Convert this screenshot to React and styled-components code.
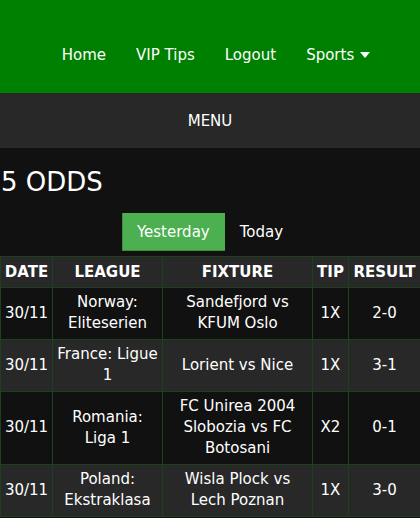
import React, { useState } from "react";
import styled, { createGlobalStyle } from "styled-components";

const tips = [
    { date: "30/11", league: "Norway: Eliteserien", fixture: "Sandefjord vs KFUM Oslo", tip: "1X", result: "2-0" },
    { date: "30/11", league: "France: Ligue 1", fixture: "Lorient vs Nice", tip: "1X", result: "3-1" },
    { date: "30/11", league: "Romania: Liga 1", fixture: "FC Unirea 2004 Slobozia vs FC Botosani", tip: "X2", result: "0-1" },
    { date: "30/11", league: "Poland: Ekstraklasa", fixture: "Wisla Plock vs Lech Poznan", tip: "1X", result: "3-0" },
];

const columns = [
    { label: "DATE", key: "date", width: 52 },
    { label: "LEAGUE", key: "league", width: 110 },
    { label: "FIXTURE", key: "fixture", width: 150 },
    { label: "TIP", key: "tip", width: 36 },
    { label: "RESULT", key: "result", width: 72 },
];

function App() {
    const [day, setDay] = useState("yesterday");

    return (
        <>
            <GlobalStyle />
            <Header>
                <Nav>
                    <NavLink>Home</NavLink>
                    <NavLink>VIP Tips</NavLink>
                    <NavLink>Logout</NavLink>
                    <NavLink>
                        Sports <Caret />
                    </NavLink>
                </Nav>
            </Header>
            <MenuBar>MENU</MenuBar>
            <Main>
                <Title>5 ODDS</Title>
                <Tabs>
                    <Tab active={day === "yesterday"} onClick={() => setDay("yesterday")}>
                        Yesterday
                    </Tab>
                    <Tab active={day === "today"} onClick={() => setDay("today")}>
                        Today
                    </Tab>
                </Tabs>
                <Table>
                    <colgroup>
                        {columns.map((c) => (
                            <col key={c.key} style={{ width: c.width }} />
                        ))}
                    </colgroup>
                    <thead>
                        <tr>
                            {columns.map((c) => (
                                <Th key={c.key}>{c.label}</Th>
                            ))}
                        </tr>
                    </thead>
                    <tbody>
                        {tips.map((row, i) => (
                            <Row key={i} striped={i % 2 === 1}>
                                {columns.map((c) => (
                                    <Td key={c.key}>{row[c.key]}</Td>
                                ))}
                            </Row>
                        ))}
                    </tbody>
                </Table>
            </Main>
        </>
    );
}

const GlobalStyle = createGlobalStyle`
    body {
        margin: 0;
        background: #111111;
        color: #ffffff;
        font-family: "DejaVu Sans", Verdana, sans-serif;
        font-size: 15px;
    }
`;

const Header = styled.header`
    height: 93px;
    background: #008000;
    display: flex;
    align-items: center;
    justify-content: center;
`;

const Nav = styled.nav`
    display: flex;
    align-items: center;
    gap: 30px;
    padding-left: 12px;
    padding-top: 16px;
`;

const NavLink = styled.a`
    color: #ffffff;
    font-size: 15px;
    line-height: 22px;
    display: flex;
    align-items: center;
    gap: 6px;
    cursor: pointer;
`;

const Caret = styled.span`
    width: 0;
    height: 0;
    border-left: 5px solid transparent;
    border-right: 5px solid transparent;
    border-top: 6px solid #ffffff;
    margin-top: 1px;
`;

const MenuBar = styled.div`
    height: 55px;
    padding-top: 1px;
    box-sizing: border-box;
    background: #282828;
    display: flex;
    align-items: center;
    justify-content: center;
    font-size: 15px;
`;

const Main = styled.main`
    display: flex;
    flex-direction: column;
`;

const Title = styled.h1`
    margin: 16px 0 13px 1px;
    font-size: 26px;
    font-weight: normal;
    line-height: 36px;
`;

const Tabs = styled.div`
    display: flex;
    justify-content: center;
    margin-bottom: 5px;
`;

const Tab = styled.button`
    font-family: inherit;
    font-size: 15px;
    line-height: 22px;
    padding: 8px 15px;
    color: #ffffff;
    border: none;
    background: ${(p) => (p.active ? "#4caf50" : "transparent")};
    box-shadow: ${(p) => (p.active ? "inset 1px -1px 0 #3d8c40" : "none")};
    cursor: pointer;
`;

const Table = styled.table`
    width: 100%;
    border-collapse: collapse;
    table-layout: fixed;
    border: 1px solid #1f401f;
`;

const Th = styled.th`
    background: #282828;
    border: 1px solid #1f401f;
    padding: 5px 2px 4px;
    font-size: 15px;
    line-height: 21px;
    font-weight: bold;
    text-align: center;
`;

const Row = styled.tr`
    background: ${(p) => (p.striped ? "#282828" : "#111111")};
`;

const Td = styled.td`
    border: 1px solid #1f401f;
    padding: 4px 3px 5px;
    font-size: 15px;
    line-height: 21px;
    text-align: center;
`;

export default App;
